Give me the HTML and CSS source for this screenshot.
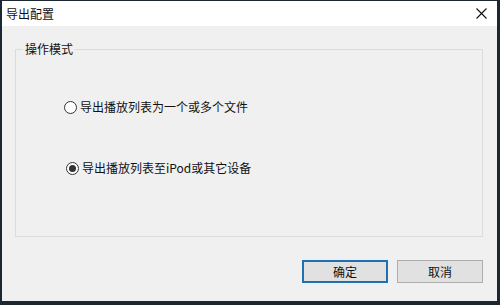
FILE: index.html
```html
<!DOCTYPE html>
<html lang="zh-CN">
<head>
    <meta charset="UTF-8">
    <title>导出配置</title>
    <link rel="stylesheet" href="styles.css">
</head>
<body>

<div class="window">
    <div class="titlebar">
        <span class="title">导出配置</span>
        <span class="close">
            <svg width="11" height="11" viewBox="0 0 11 11">
                <path d="M0.5 0.5 L10.5 10.5 M10.5 0.5 L0.5 10.5" stroke="#111" stroke-width="1.1" fill="none"/>
            </svg>
        </span>
    </div>

    <div class="client">
        <fieldset class="group">
            <legend>操作模式</legend>
            <div class="option first">
                <span class="radio"></span>
                <span>导出播放列表为一个或多个文件</span>
            </div>
            <div class="option second">
                <span class="radio checked"></span>
                <span>导出播放列表至iPod或其它设备</span>
            </div>
        </fieldset>

        <div class="buttons">
            <button type="button" class="btn default">确定</button>
            <button type="button" class="btn">取消</button>
        </div>
    </div>
</div>

</body>
</html>
```

FILE: styles.css
```css
html, body {
    margin: 0;
    padding: 0;
}
body {
    width: 500px;
    height: 305px;
    background-color: #1b2733;
    font-family: "Noto Sans CJK SC", "Microsoft YaHei", sans-serif;
    font-size: 12px;
    color: #111;
    overflow: hidden;
}
.window {
    margin: 1px 3px 0 2px;
    height: 300px;
    background-color: #f0f0f0;
    display: flex;
    flex-direction: column;
}
.titlebar {
    height: 25px;
    background-color: #fff;
    display: flex;
    align-items: center;
    justify-content: space-between;
    padding: 0 10px 0 4px;
}
.title {
    line-height: 16px;
}
.close {
    display: flex;
}
.client {
    flex: 1;
    padding: 15px 14px 0 13px;
}
.group {
    margin: 0;
    padding: 0;
    height: 194px;
    border: 1px solid #dcdcdc;
}
.group legend {
    margin-left: 7px;
    padding: 0 2px;
    line-height: 16px;
}
.option {
    display: flex;
    align-items: center;
    gap: 3px;
    line-height: 16px;
}
.option.first {
    margin: 42px 0 0 48px;
}
.option.second {
    margin: 45px 0 0 50px;
}
.radio {
    width: 11px;
    height: 11px;
    border: 1px solid #333;
    border-radius: 50%;
    background-color: #fff;
    display: flex;
    align-items: center;
    justify-content: center;
}
.radio.checked::after {
    content: "";
    width: 7px;
    height: 7px;
    border-radius: 50%;
    background-color: #333;
}
.buttons {
    display: flex;
    justify-content: flex-end;
    gap: 9px;
    margin-top: 23px;
}
.btn {
    width: 86px;
    height: 23px;
    padding: 0;
    font-family: inherit;
    font-size: 12px;
    color: #111;
    background-color: #e1e1e1;
    border: 1px solid #adadad;
}
.btn.default {
    border: 2px solid #1e6fb4;
}
```
